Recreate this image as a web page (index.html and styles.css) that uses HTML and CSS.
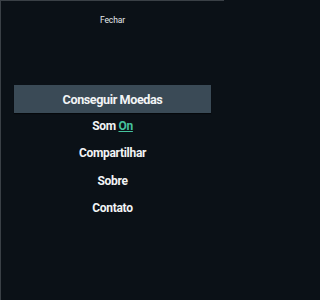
FILE: index.html
```html
<!DOCTYPE html>
<html>
<head>
<meta charset="utf-8">
<link rel="stylesheet" href="styles.css">
</head>
<body>
<div class="screen">
  <div class="close">Fechar</div>
  <div class="menu">
    <div class="primary">Conseguir Moedas</div>
    <div class="item">Som <span class="on">On</span></div>
    <div class="item">Compartilhar</div>
    <div class="item">Sobre</div>
    <div class="item">Contato</div>
  </div>
</div>
</body>
</html>
```
FILE: styles.css
```css
html, body {
  margin: 0;
  padding: 0;
  background: #0b1117;
}
.screen {
  width: 224px;
  height: 300px;
  box-sizing: border-box;
  border-top: 1px solid #3a4046;
  border-left: 1px solid #3a4046;
  background: #0b1117;
  font-family: Roboto, "Noto Sans", sans-serif;
  color: #f2f4f5;
  display: flex;
  flex-direction: column;
}
.close {
  font-size: 8.5px;
  line-height: 11px;
  text-align: center;
  padding-top: 14px;
  color: #e6e9eb;
  letter-spacing: -0.1px;
}
.menu {
  margin-top: 59px;
  display: flex;
  flex-direction: column;
  align-items: stretch;
}
.primary {
  margin: 0 13px 0 13px;
  height: 28px;
  line-height: 29px;
  background: #3a4a56;
  text-align: center;
  font-size: 12.6px;
  letter-spacing: -0.4px;
  font-weight: 700;
  box-shadow: 0 1px 1px rgba(0,0,0,0.5);
}
.item {
  height: 27.4px;
  line-height: 27.4px;
  text-align: center;
  font-size: 12px;
  letter-spacing: -0.3px;
  font-weight: 700;
}
.item:first-of-type {
  margin-top: 1.5px;
}
.on {
  color: #45c39d;
  text-decoration: underline;
}
```
